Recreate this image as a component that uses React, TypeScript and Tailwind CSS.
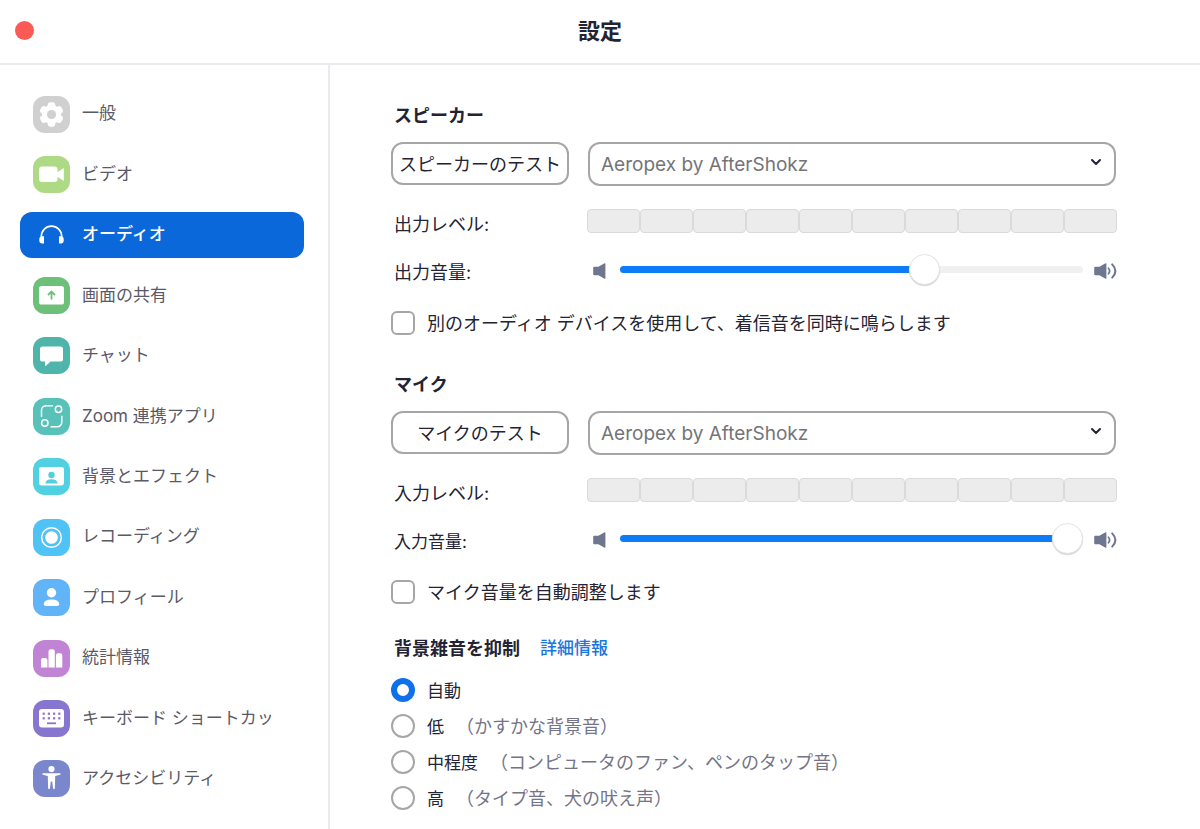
import { useState } from "react";
import type { CSSProperties, ReactNode } from "react";
import { ChevronDown } from "lucide-react";

type NavEntry = {
    label: string;
    tile: string;
    icon: ReactNode;
};

const NAV: NavEntry[] = [
    {
        label: "一般",
        tile: "bg-[#d0d0d0]",
        icon: (
            <>
                <circle cx="18.5" cy="18.5" r="9.5" />
                {[0, 60, 120, 180, 240, 300].map((deg) => (
                    <rect
                        key={deg}
                        x="14.7"
                        y="6.3"
                        width="7.6"
                        height="9"
                        rx="2.9"
                        transform={`rotate(${deg} 18.5 18.5)`}
                    />
                ))}
                <circle cx="18.5" cy="18.5" r="4.6" fill="#d0d0d0" />
            </>
        ),
    },
    {
        label: "ビデオ",
        tile: "bg-[#aed985]",
        icon: (
            <>
                <rect x="6" y="10.5" width="18.5" height="15.5" rx="3" />
                <path d="M24 16.5 30 12.4q.8-.5.8.4v11.4q0 .9-.8.4L24 20.5z" />
            </>
        ),
    },
    {
        label: "オーディオ",
        tile: "bg-transparent",
        icon: (
            <>
                <path
                    d="M8.3 22v-1.5a10.2 10.4 0 0 1 20.4 0V22"
                    fill="none"
                    stroke="#fff"
                    strokeWidth="1.6"
                />
                <path d="M11 20.2v7.3H9.2a2.9 2.9 0 0 1-2.9-2.9v-1.5a2.9 2.9 0 0 1 2.9-2.9z" />
                <path d="M26 20.2v7.3h1.8a2.9 2.9 0 0 0 2.9-2.9v-1.5a2.9 2.9 0 0 0-2.9-2.9z" />
            </>
        ),
    },
    {
        label: "画面の共有",
        tile: "bg-[#6cc07a]",
        icon: (
            <>
                <rect x="6" y="9" width="25" height="18.5" rx="2.6" />
                <path
                    d="M18.5 22.6v-7.4M15 18l3.5-3.4L22 18"
                    fill="none"
                    stroke="#6cc07a"
                    strokeWidth="1.8"
                />
            </>
        ),
    },
    {
        label: "チャット",
        tile: "bg-[#4fb5ab]",
        icon: (
            <path d="M9.6 9.5h17.8A2.6 2.6 0 0 1 30 12.1v9.8a2.6 2.6 0 0 1-2.6 2.6H17.6L13 28.8q-1 .7-1-.5v-3.8H9.6A2.6 2.6 0 0 1 7 21.9v-9.8a2.6 2.6 0 0 1 2.6-2.6z" />
        ),
    },
    {
        label: "Zoom 連携アプリ",
        tile: "bg-[#59c2b8]",
        icon: (
            <g fill="none" stroke="#fff" strokeWidth="1.5">
                <path d="M20 7.8h-7a4.5 4.5 0 0 0-4.5 4.5v6.5" />
                <path d="M17.5 28.8h6.8a4.5 4.5 0 0 0 4.5-4.5v-6.5" />
                <circle cx="25.5" cy="11.2" r="3.2" />
                <circle cx="11.8" cy="25" r="3.2" />
            </g>
        ),
    },
    {
        label: "背景とエフェクト",
        tile: "bg-[#50d0e0]",
        icon: (
            <>
                <rect x="6" y="9" width="25" height="18.5" rx="2.4" />
                <g fill="#50d0e0">
                    <circle cx="18.5" cy="17" r="3.2" />
                    <path d="M12.3 25.6q.6-4.4 6.2-4.4t6.2 4.4z" />
                </g>
            </>
        ),
    },
    {
        label: "レコーディング",
        tile: "bg-[#50c3f6]",
        icon: (
            <>
                <circle
                    cx="18.5"
                    cy="18.5"
                    r="9.8"
                    fill="none"
                    stroke="#fff"
                    strokeWidth="1.5"
                />
                <circle cx="18.5" cy="18.5" r="6.3" />
            </>
        ),
    },
    {
        label: "プロフィール",
        tile: "bg-[#62b4f9]",
        icon: (
            <>
                <circle cx="18.5" cy="13.7" r="4.7" />
                <path d="M10.8 25.2q0-4.7 7.7-4.7t7.7 4.7q0 1.8-2 1.8H12.8q-2 0-2-1.8z" />
            </>
        ),
    },
    {
        label: "統計情報",
        tile: "bg-[#c184d4]",
        icon: (
            <>
                <path d="M8 27.5v-7.2a2.2 2.2 0 0 1 2.2-2.2h2a2.2 2.2 0 0 1 2.2 2.2v7.2z" />
                <path d="M15.5 27.5V11.4a2.2 2.2 0 0 1 2.2-2.2h1.9a2.2 2.2 0 0 1 2.2 2.2v16.1z" />
                <path d="M22.9 27.5V15.4a2.2 2.2 0 0 1 2.2-2.2h2a2.2 2.2 0 0 1 2.2 2.2v12.1z" />
            </>
        ),
    },
    {
        label: "キーボード ショートカッ",
        tile: "bg-[#8676cf]",
        icon: (
            <>
                <rect x="6" y="9" width="25" height="18.5" rx="3" />
                <g fill="#8676cf">
                    {[9.6, 14.8, 20, 25.2].map((x) => (
                        <g key={x}>
                            <rect x={x} y="12.6" width="2.2" height="2.2" />
                            <rect x={x} y="17.2" width="2.2" height="2.2" />
                        </g>
                    ))}
                    <rect x="14" y="22.4" width="9" height="1.8" />
                </g>
            </>
        ),
    },
    {
        label: "アクセシビリティ",
        tile: "bg-[#7a87cc]",
        icon: (
            <>
                <circle cx="18.5" cy="9" r="3.1" />
                <path d="M10 13.2h17q.7 0 .7.7t-.7.9l-4.8 1.2-.3 12.1q0 1.1-.9 1.1t-1-1.1l-.8-6.6h-1.4l-.8 6.6q-.1 1.1-1 1.1t-.9-1.1L14.8 16 10 14.8q-.7-.2-.7-.9t.7-.7z" />
            </>
        ),
    },
];

const NOISE_LEVELS = [
    { label: "自動", hint: "" },
    { label: "低", hint: "（かすかな背景音）" },
    { label: "中程度", hint: "（コンピュータのファン、ペンのタップ音）" },
    { label: "高", hint: "（タイプ音、犬の吠え声）" },
];

function SpeakerIcon({ loud = false }: { loud?: boolean }) {
    return (
        <svg
            className={loud ? "mt-1 w-[23px] h-4 shrink-0" : "mt-1 w-3.5 h-4 shrink-0"}
            viewBox={loud ? "0 0 23 16" : "0 0 14 16"}
            fill="#6e7690"
            aria-hidden="true"
        >
            <path d="M1.2 3.8h4.2L11.6.3q.8-.4.8.6v14.2q0 1-.8.6l-6.2-3.5H1.2q-1 0-1-1V4.8q0-1 1-1z" />
            {loud && (
                <g fill="none" stroke="#6e7690" strokeLinecap="round">
                    <path d="M14.4 5.2q2.4 2.8 0 5.6" strokeWidth="1.7" />
                    <path d="M18.2 1.4q6.4 6.6 0 13.2" strokeWidth="2" />
                </g>
            )}
        </svg>
    );
}

function LevelMeter() {
    return (
        <div className="grid grid-cols-10 h-6">
            {Array.from({ length: 10 }, (_, i) => (
                <div key={i} className="border border-[#dadada] rounded bg-[#ececec]" />
            ))}
        </div>
    );
}

type DeviceSectionProps = {
    id: string;
    title: string;
    testLabel: string;
    levelLabel: string;
    volumeLabel: string;
    volumeSize: string;
    initialVolume: number;
    checkLabel: string;
};

function DeviceSection({
    id,
    title,
    testLabel,
    levelLabel,
    volumeLabel,
    volumeSize,
    initialVolume,
    checkLabel,
}: DeviceSectionProps) {
    const [volume, setVolume] = useState(initialVolume);

    return (
        <section>
            <h2 className="pl-[3px] mb-[13px] text-[18px] leading-[27px] font-bold">{title}</h2>
            <div className="grid grid-cols-[178px_1fr] gap-x-[18px]">
                <button
                    type="button"
                    className="h-[43px] pt-0.5 border-2 border-[#a6a6a9] rounded-xl text-[18px] whitespace-nowrap"
                >
                    {testLabel}
                </button>
                <div className="relative mx-px">
                    <select
                        aria-label={title}
                        className="appearance-none w-full h-11 pt-0.5 pl-[11px] pr-10 border-2 border-[#a6a6a9] rounded-xl text-[19px] text-[#747478] bg-white"
                    >
                        <option>Aeropex by AfterShokz</option>
                    </select>
                    <ChevronDown
                        className="absolute right-3 top-3 w-4 h-4 pointer-events-none"
                        strokeWidth={3}
                    />
                </div>

                <div className="mt-[23px] h-6 pl-[3px] pt-1 text-[18px] leading-6">{levelLabel}</div>
                <div className="mt-[23px]">
                    <LevelMeter />
                </div>

                <label
                    htmlFor={`${id}-volume`}
                    className={`mt-5 h-8 pl-[3px] pt-1 leading-8 ${volumeSize}`}
                >
                    {volumeLabel}
                </label>
                <div className="mt-5 pl-1.5 h-8 flex items-center">
                    <SpeakerIcon />
                    <input
                        id={`${id}-volume`}
                        type="range"
                        value={volume}
                        onChange={(e) => setVolume(Number(e.target.value))}
                        style={{ "--fill": `${volume}%` } as CSSProperties}
                        className="appearance-none flex-1 min-w-0 h-8 ml-[13px] mr-[11px] bg-transparent [&::-webkit-slider-runnable-track]:h-[7px] [&::-webkit-slider-runnable-track]:rounded-full [&::-webkit-slider-runnable-track]:bg-[linear-gradient(to_right,#0e7cf7_var(--fill),#f0f0f0_var(--fill))] [&::-webkit-slider-thumb]:appearance-none [&::-webkit-slider-thumb]:w-[31px] [&::-webkit-slider-thumb]:h-[31px] [&::-webkit-slider-thumb]:-mt-3 [&::-webkit-slider-thumb]:rounded-full [&::-webkit-slider-thumb]:bg-white [&::-webkit-slider-thumb]:border [&::-webkit-slider-thumb]:border-[#e4e4e4] [&::-webkit-slider-thumb]:shadow-[0_1px_1px_#d4d4d4]"
                    />
                    <SpeakerIcon loud />
                </div>
            </div>
            <label className="mt-[25px] flex items-center gap-3 text-[18px] leading-6">
                <input
                    type="checkbox"
                    className="appearance-none w-6 h-6 shrink-0 border-2 border-[#a6a6a9] rounded-md bg-white checked:bg-[#0e71eb] checked:border-[#0e71eb]"
                />
                <span className="pt-0.5">{checkLabel}</span>
            </label>
        </section>
    );
}

export default function App() {
    const [active, setActive] = useState("オーディオ");

    return (
        <div
            lang="ja"
            className="min-h-screen flex flex-col bg-white text-[#232333] font-[Inter,'Noto_Sans_CJK_JP',sans-serif]"
        >
            <header className="h-[65px] shrink-0 px-[15px] pb-0.5 grid grid-cols-[1fr_auto_1fr] items-center border-b-2 border-[#ebebef]">
                <button
                    type="button"
                    aria-label="閉じる"
                    className="w-[19px] h-[19px] rounded-full bg-[#fc5b55]"
                />
                <h1 className="text-[22px] leading-8 font-bold">設定</h1>
            </header>

            <div className="flex flex-1">
                <nav className="w-[330px] shrink-0 pl-5 pr-6 pt-[26px] pb-[27px] flex flex-col justify-between border-r-2 border-[#ebebef]">
                    {NAV.map(({ label, tile, icon }) => (
                        <button
                            key={label}
                            type="button"
                            onClick={() => setActive(label)}
                            className={`h-[46px] pl-[13px] flex items-center gap-3 rounded-xl text-[17px] whitespace-nowrap ${
                                active === label
                                    ? "bg-[#0b68da] text-white font-medium"
                                    : "text-[#5a5967]"
                            }`}
                        >
                            <svg
                                className={`w-[37px] h-[37px] shrink-0 rounded-xl ${tile}`}
                                viewBox="0 0 37 37"
                                fill="#fff"
                                aria-hidden="true"
                            >
                                {icon}
                            </svg>
                            {label}
                        </button>
                    ))}
                </nav>

                <main className="flex-1 min-w-0 pl-[61px] pr-[83px] pt-[37px]">
                    <DeviceSection
                        id="speaker"
                        title="スピーカー"
                        testLabel="スピーカーのテスト"
                        levelLabel="出力レベル:"
                        volumeLabel="出力音量:"
                        volumeSize="text-[18px]"
                        initialVolume={67}
                        checkLabel="別のオーディオ デバイスを使用して、着信音を同時に鳴らします"
                    />
                    <div className="mt-[35px]">
                        <DeviceSection
                            id="mic"
                            title="マイク"
                            testLabel="マイクのテスト"
                            levelLabel="入力レベル:"
                            volumeLabel="入力音量:"
                            volumeSize="text-[17px]"
                            initialVolume={100}
                            checkLabel="マイク音量を自動調整します"
                        />
                    </div>

                    <fieldset className="mt-[30px]">
                        <legend className="pl-[3px] mb-4 flex items-center gap-5 leading-[27px]">
                            <span className="text-[18px] font-bold">背景雑音を抑制</span>
                            <a href="#details" className="text-[17px] font-medium text-[#1a75dc]">
                                詳細情報
                            </a>
                        </legend>
                        <div className="flex flex-col gap-3">
                            {NOISE_LEVELS.map(({ label, hint }, i) => (
                                <label key={label} className="h-6 flex items-center leading-6">
                                    <input
                                        type="radio"
                                        name="noise"
                                        defaultChecked={i === 0}
                                        className="appearance-none w-6 h-6 shrink-0 rounded-full border-2 border-[#a6a6a9] bg-white checked:border-[6px] checked:border-[#0e71eb]"
                                    />
                                    <span className="ml-3 pt-0.5 text-[17px]">{label}</span>
                                    {hint && (
                                        <span className="ml-3 pt-0.5 text-[18px] text-[#747487]">
                                            {hint}
                                        </span>
                                    )}
                                </label>
                            ))}
                        </div>
                    </fieldset>
                </main>
            </div>
        </div>
    );
}
